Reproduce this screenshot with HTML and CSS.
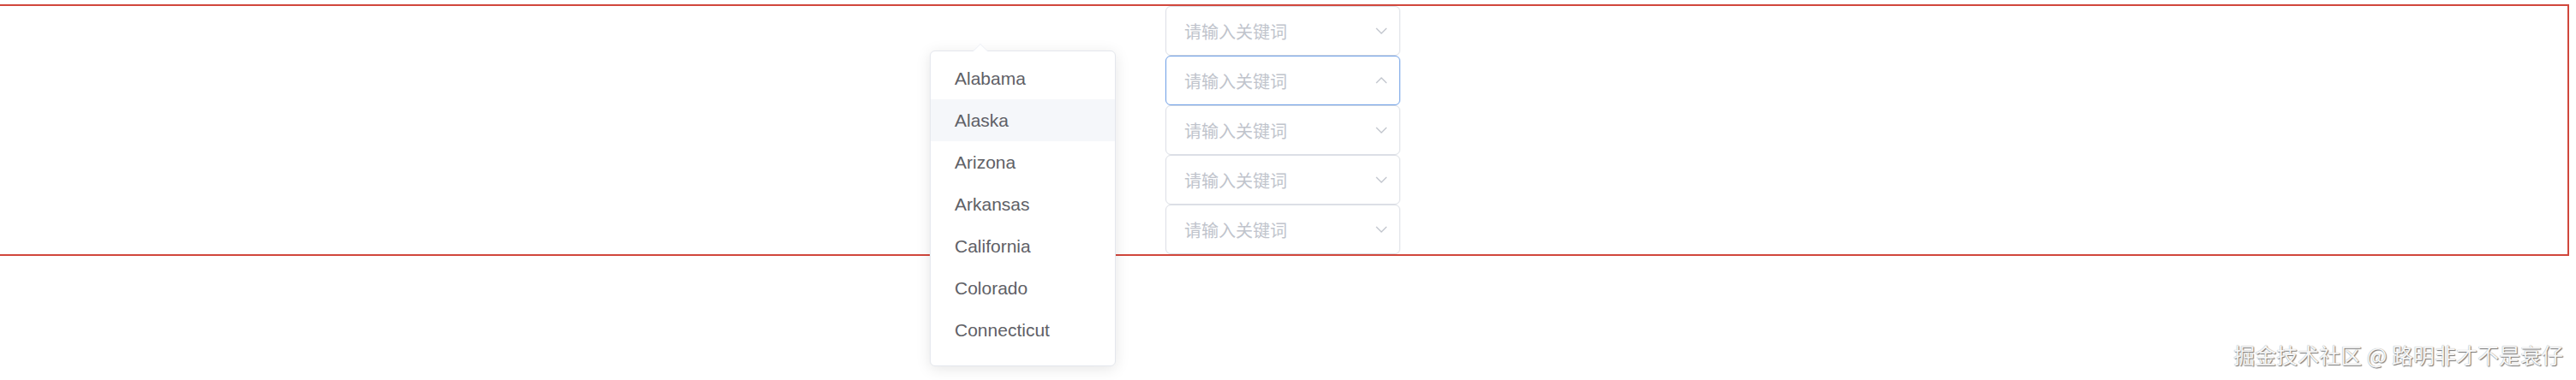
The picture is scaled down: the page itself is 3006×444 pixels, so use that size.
FILE: index.html
```html
<!DOCTYPE html>
<html lang="zh-CN">
<head>
    <meta charset="UTF-8">
    <meta name="viewport" content="width=device-width, initial-scale=1.0">
    <title>Select</title>
    <link rel="stylesheet" href="styles.css">
</head>
<body>

    <div class="demo-box">
        <div class="select">
            <span class="placeholder">请输入关键词</span>
            <svg class="arrow" viewBox="0 0 14 8"><path d="M1 1 L7 7 L13 1"/></svg>
        </div>
        <div class="select is-focus">
            <span class="placeholder">请输入关键词</span>
            <svg class="arrow" viewBox="0 0 14 8"><path d="M1 7 L7 1 L13 7"/></svg>
        </div>
        <div class="select">
            <span class="placeholder">请输入关键词</span>
            <svg class="arrow" viewBox="0 0 14 8"><path d="M1 1 L7 7 L13 1"/></svg>
        </div>
        <div class="select">
            <span class="placeholder">请输入关键词</span>
            <svg class="arrow" viewBox="0 0 14 8"><path d="M1 1 L7 7 L13 1"/></svg>
        </div>
        <div class="select">
            <span class="placeholder">请输入关键词</span>
            <svg class="arrow" viewBox="0 0 14 8"><path d="M1 1 L7 7 L13 1"/></svg>
        </div>

        <!-- dropdown of the focused select -->
        <div class="dropdown">
            <span class="popper-arrow"></span>
            <ul class="dropdown-list">
                <li class="dropdown-item">Alabama</li>
                <li class="dropdown-item hover">Alaska</li>
                <li class="dropdown-item">Arizona</li>
                <li class="dropdown-item">Arkansas</li>
                <li class="dropdown-item">California</li>
                <li class="dropdown-item">Colorado</li>
                <li class="dropdown-item">Connecticut</li>
            </ul>
        </div>
    </div>

    <div class="watermark">掘金技术社区 @ 路明非才不是衰仔</div>

</body>
</html>
```

FILE: styles.css
```css
body {
    font-family: "Liberation Sans", Arial, "Noto Sans CJK SC", sans-serif;
    margin: 0;
    padding: 5px 0 0;
    background-color: #fff;
    height: 439px;
    overflow: hidden;
}

.demo-box {
    position: relative;
    display: flex;
    flex-direction: column;
    align-items: center;
    margin: 0 8px 0 -4px;
    border: 2px solid #d1473c;
}

.select {
    display: flex;
    align-items: center;
    justify-content: space-between;
    box-sizing: border-box;
    width: 274px;
    height: 58px;
    padding: 0 14px 0 21px;
    border: 1px solid #dcdfe6;
    border-radius: 6px;
    background-color: #fff;
}

.select.is-focus {
    border-color: #6e9fe6;
}

.placeholder {
    font-family: "Noto Sans CJK SC", sans-serif;
    font-size: 20px;
    color: #c0c4cc;
}

.arrow {
    width: 14px;
    height: 8px;
    fill: none;
    stroke: #c0c4cc;
    stroke-width: 1.3;
}

.dropdown {
    position: absolute;
    left: 1087px;
    top: 52px;
    box-sizing: border-box;
    width: 217px;
    border: 1px solid #e4e7ed;
    border-radius: 6px;
    background-color: #fff;
    box-shadow: 0 3px 17px 0 rgba(0, 0, 0, 0.1);
}

.popper-arrow {
    position: absolute;
    top: -9px;
    left: 49px;
    width: 0;
    height: 0;
    border-left: 9px solid transparent;
    border-right: 9px solid transparent;
    border-bottom: 9px solid #ebeef5;
}

.popper-arrow::after {
    content: "";
    position: absolute;
    top: 1px;
    left: -8px;
    border-left: 8px solid transparent;
    border-right: 8px solid transparent;
    border-bottom: 8px solid #fff;
}

.dropdown-list {
    list-style: none;
    margin: 0;
    padding: 7px 0 17px;
}

.dropdown-item {
    height: 49px;
    line-height: 49px;
    padding: 0 28px;
    font-size: 21px;
    color: #5e6066;
}

.dropdown-item.hover {
    background-color: #f5f7fa;
}

.watermark {
    position: absolute;
    right: 15px;
    top: 396px;
    font-family: "Noto Sans CJK SC", sans-serif;
    font-size: 25px;
    color: #f6f6f6;
    text-shadow: 1px 1px 1px #777, 0 0 1px #999;
}
```
